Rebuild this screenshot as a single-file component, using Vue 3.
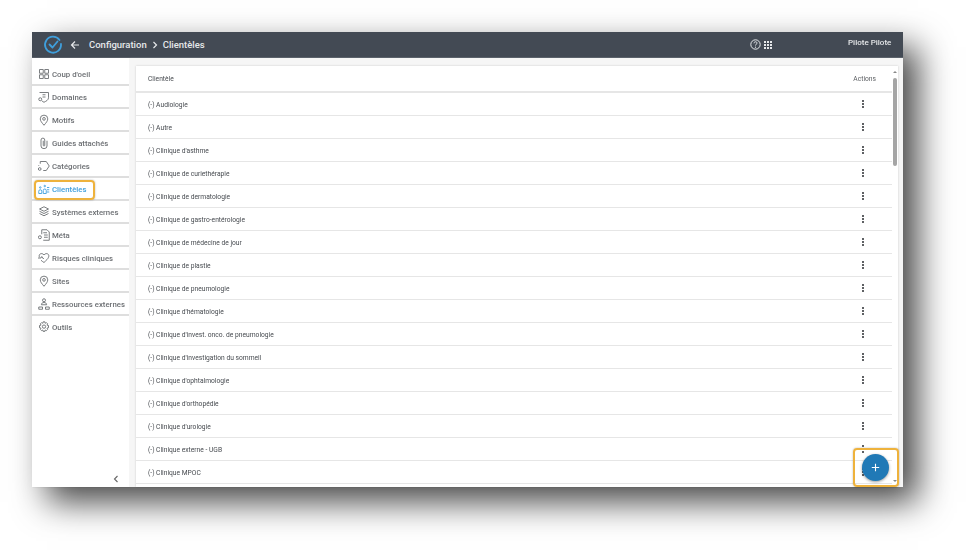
<script setup>
const navItems = [
  { label: "Coup d'oeil", icon: "grid" },
  { label: "Domaines", icon: "shield" },
  { label: "Motifs", icon: "pin" },
  { label: "Guides attachés", icon: "clip" },
  { label: "Catégories", icon: "tag" },
  { label: "Clientèles", icon: "people", active: true },
  { label: "Systèmes externes", icon: "stack" },
  { label: "Méta", icon: "doc" },
  { label: "Risques cliniques", icon: "heart" },
  { label: "Sites", icon: "pin" },
  { label: "Ressources externes", icon: "org" },
  { label: "Outils", icon: "gear" }
]

const iconPaths = {
  grid: "M2 2h5v5H2zM9 2h5v5H9zM2 9h5v5H2zM9 9h5v5H9z",
  shield: "M2 2h12v7c0 3-3 4.500-6 6-1-.5-2-1-3-2M6 5h4M6 8h4M1 11a2 2 0 1 0 4 0a2 2 0 1 0-4 0",
  pin: "M8 15c-3-3.500-5-6-5-8.500a5 5 0 0 1 10 0c0 2.500-2 5-5 8.500zM6.200 6.500a1.800 1.800 0 1 0 3.600 0a1.800 1.800 0 1 0-3.600 0",
  clip: "M12 5v7a4 3.500 0 0 1-8 0V4a2.500 2.500 0 0 1 5 0v7a1 1 0 0 1-2 0V5",
  tag: "M3 5V2h8l4 6-4 6H7M1 8V7M0.500 12a1.800 1.800 0 1 0 3.600 0a1.800 1.800 0 1 0-3.600 0",
  people: "M1 14v-3a2 2 0 0 1 4 0v3zM2 6a1 1 0 1 0 2 0a1 1 0 1 0-2 0M7 14v-4a2 2 0 0 1 4 0v4zM8 4a1 1 0 1 0 2 0a1 1 0 1 0-2 0M12 6h3M12 9h3M12 12h3",
  stack: "M8 1l6 3-6 3-6-3zM2 7l6 3 6-3M2 10l6 3 6-3",
  doc: "M5 7V1h7l3 3v11H7M7 5h5M8 8h5M8 11h5M0.500 11a2 2 0 1 0 4 0a2 2 0 1 0-4 0",
  heart: "M2 7C0 3 5 0 8 4c3-4 8-1 6 3-.5 2-3 4-6 7-1.500-1-3-2-4-3M0 8h4l1-2 2 3 1-1",
  org: "M6 3a2 2 0 1 0 4 0a2 2 0 1 0-4 0M4.500 9c0-2 1.500-3 3.500-3s3.500 1 3.500 3zM1 12h5v3H1zM10 12h5v3h-5z",
  gear: "M7 1h2l.5 2 1.800-.8 1.500 1.500L12 5.500l2 .5v3l-2 .5.8 1.800-1.500 1.500-1.800-.8-.5 2H7l-.5-2-1.800.8-1.500-1.500.8-1.800-2-.5V6l2-.5-.8-1.800 1.500-1.500 1.800.8zM5.800 7.500a2.200 2.200 0 1 0 4.400 0a2.200 2.200 0 1 0-4.400 0"
}

const rows = [
  "Audiologie",
  "Autre",
  "Clinique d'asthme",
  "Clinique de curiethérapie",
  "Clinique de dermatologie",
  "Clinique de gastro-entérologie",
  "Clinique de médecine de jour",
  "Clinique de plastie",
  "Clinique de pneumologie",
  "Clinique d'hématologie",
  "Clinique d'invest. onco. de pneumologie",
  "Clinique d'investigation du sommeil",
  "Clinique d'ophtalmologie",
  "Clinique d'orthopédie",
  "Clinique d'urologie",
  "Clinique externe - UGB",
  "Clinique MPOC"
]
</script>

<template>
  <div class="page">
    <div class="window">
      <header class="topbar">
        <svg class="logo" width="20" height="20" viewBox="0 0 20 20" fill="none">
          <path d="M16.500 5A8 8 0 1 0 18 9" stroke="#3f9fdc" stroke-width="1.800" stroke-linecap="round" />
          <path d="M6.500 9.500l3 3 5-6" stroke="#3f9fdc" stroke-width="1.800" stroke-linecap="round" stroke-linejoin="round" />
        </svg>
        <svg class="back" width="10" height="10" viewBox="0 0 10 10" fill="none">
          <path d="M9 5H1.500M5 1.500L1.500 5 5 8.500" stroke="#e6e8ea" stroke-width="1.200" />
        </svg>
        <div class="crumbs">
          <span>Configuration</span>
          <svg width="6" height="8" viewBox="0 0 6 8" fill="none">
            <path d="M1.500 1l3 3-3 3" stroke="#e6e8ea" stroke-width="1.200" />
          </svg>
          <span>Clientèles</span>
        </div>
        <div class="top-actions">
          <svg width="11" height="11" viewBox="0 0 11 11" fill="none">
            <circle cx="5.500" cy="5.500" r="4.700" stroke="#e6e8ea" stroke-width="1" />
            <path d="M4 4.300c0-2 3-2 3-.2 0 1.100-1.500 1.200-1.500 2.400" stroke="#e6e8ea" stroke-width="1" />
            <circle cx="5.500" cy="8.200" r=".6" fill="#e6e8ea" />
          </svg>
          <div class="apps">
            <i v-for="n in 9" :key="n"></i>
          </div>
        </div>
        <div class="user">Pilote Pilote</div>
      </header>

      <div class="body">
        <aside class="sidebar">
          <nav class="nav">
            <a
              v-for="item in navItems"
              :key="item.label"
              class="nav-item"
              :class="{ 'is-active': item.active }"
            >
              <svg class="nav-icon" width="12" height="12" viewBox="0 0 16 16" fill="none">
                <path :d="iconPaths[item.icon]" stroke="currentColor" stroke-width="1.200" />
              </svg>
              <span>{{ item.label }}</span>
            </a>
          </nav>
          <div class="collapse">
            <svg width="6" height="8" viewBox="0 0 6 8" fill="none">
              <path d="M4.500 1l-3 3 3 3" stroke="#666" stroke-width="1.100" />
            </svg>
          </div>
        </aside>

        <main class="content">
          <section class="card">
            <div class="table">
              <div class="row row-head">
                <span>Clientèle</span>
                <span class="head-actions">Actions</span>
              </div>
              <div v-for="name in rows" :key="name" class="row">
                <span>(-) {{ name }}</span>
                <span class="dots"><i></i><i></i><i></i></span>
              </div>
            </div>
            <div class="scrollbar">
              <span class="arrow up"></span>
              <span class="thumb"></span>
              <span class="arrow down"></span>
            </div>
          </section>
        </main>
      </div>

      <div class="highlight fab-frame">
        <button class="fab">
          <svg width="9" height="9" viewBox="0 0 9 9" fill="none">
            <path d="M4.500 .8v7.400M.8 4.500h7.400" stroke="#fff" stroke-width="1.100" />
          </svg>
        </button>
      </div>
      <div class="highlight nav-frame"></div>
    </div>
  </div>
</template>

<style scoped>
.page {
  width: 968px;
  height: 552px;
  box-sizing: border-box;
  padding: 32px 65px 65px 32px;
  background: #fff;
  overflow: hidden;
  font-family: Roboto, "Liberation Sans", sans-serif;
}

.window {
  position: relative;
  height: 455px;
  display: flex;
  flex-direction: column;
  background: #fff;
  box-shadow: 15px 15px 32px rgba(0, 0, 0, 0.72);
  filter: blur(0.45px);
}

.topbar {
  flex: 0 0 26px;
  display: flex;
  align-items: center;
  background: #434a54;
  border-bottom: 1px solid #5b626b;
  box-sizing: border-box;
  color: #e6e8ea;
  padding-left: 11px;
}

.logo {
  margin-right: 7px;
}

.back {
  margin-right: 9px;
}

.crumbs {
  display: flex;
  align-items: center;
  gap: 5px;
  font-size: 9.500px;
  font-weight: 500;
}

.top-actions {
  margin-left: auto;
  display: flex;
  align-items: center;
  gap: 3px;
}

.apps {
  display: grid;
  grid-template-columns: repeat(3, 2px);
  grid-auto-rows: 2px;
  gap: 1px;
}

.apps i {
  background: #e6e8ea;
}

.user {
  width: 42px;
  margin: 0 13px 0 76px;
  align-self: flex-start;
  padding-top: 6px;
  font-size: 8px;
  font-weight: 500;
  white-space: nowrap;
}

.body {
  flex: 1;
  min-height: 0;
  display: flex;
}

.sidebar {
  flex: 0 0 97px;
  width: 97px;
  min-width: 0;
  display: flex;
  flex-direction: column;
  justify-content: space-between;
  padding-top: 5px;
  box-sizing: border-box;
  box-shadow: 1px 0 2px rgba(0, 0, 0, 0.14);
}

.nav {
  display: flex;
  flex-direction: column;
}

.nav-item {
  height: 23px;
  box-sizing: border-box;
  display: flex;
  align-items: center;
  gap: 2px;
  padding: 1px 0 0 6px;
  border-bottom: 2px solid #dedede;
  color: #6c6f73;
  font-size: 7.800px;
  font-weight: 500;
  white-space: nowrap;
}

.nav-item:last-child {
  border-bottom-color: transparent;
}

.nav-item.is-active {
  color: #3f9fdc;
}

.nav-icon {
  flex: none;
}

.collapse {
  display: flex;
  justify-content: flex-end;
  padding: 0 10px 4px 0;
}

.content {
  flex: 1;
  min-width: 0;
  padding: 8px 5px 0 7px;
  background: #f6f6f6;
}

.card {
  height: 100%;
  display: flex;
  background: #fff;
  overflow: hidden;
  box-shadow: 0 0 2px rgba(0, 0, 0, 0.18);
}

.table {
  flex: 1;
  min-width: 0;
}

.row {
  height: 23px;
  box-sizing: border-box;
  display: flex;
  align-items: center;
  justify-content: space-between;
  padding: 1px 27px 0 12px;
  border-bottom: 1px solid #e6e6e6;
  color: #474b50;
  font-size: 6.700px;
}

.row-head {
  height: 27px;
  border-bottom-width: 2px;
  padding-right: 16px;
}

.head-actions {
  color: #5c5f63;
}

.dots {
  display: flex;
  flex-direction: column;
  gap: 1px;
  margin: 0 1px 1px 0;
}

.dots i {
  width: 2px;
  height: 2px;
  border-radius: 50%;
  background: #2a2d31;
}

.scrollbar {
  flex: 0 0 6px;
  position: relative;
  display: flex;
  flex-direction: column;
  align-items: center;
  background: #fff;
}

.thumb {
  width: 4px;
  height: 88px;
  margin-top: 5px;
  border-radius: 2px;
  background: #a5a5a5;
}

.arrow {
  width: 0;
  height: 0;
  border-left: 2px solid transparent;
  border-right: 2px solid transparent;
}

.arrow.up {
  margin-top: 5px;
  border-bottom: 2px solid #888;
}

.arrow.down {
  margin-top: auto;
  margin-bottom: 5px;
  border-top: 2px solid #888;
}

.highlight {
  position: absolute;
  box-sizing: border-box;
  border: 2px solid #eeb23c;
  border-radius: 4px;
  box-shadow: 0 0 2px rgba(0, 0, 0, 0.3);
}

.nav-frame {
  left: 2px;
  top: 148px;
  width: 61px;
  height: 20px;
}

.fab-frame {
  left: 821px;
  top: 416px;
  width: 46px;
  height: 39px;
  display: flex;
  align-items: center;
  justify-content: center;
}

.fab {
  width: 27px;
  height: 27px;
  margin-right: 1px;
  padding: 0;
  border: 0;
  border-radius: 50%;
  display: flex;
  align-items: center;
  justify-content: center;
  background: #2079b6;
  box-shadow: 0 1px 3px rgba(0, 0, 0, 0.4);
}
</style>

<style>
html,
body {
  background: #fff;
}
</style>
